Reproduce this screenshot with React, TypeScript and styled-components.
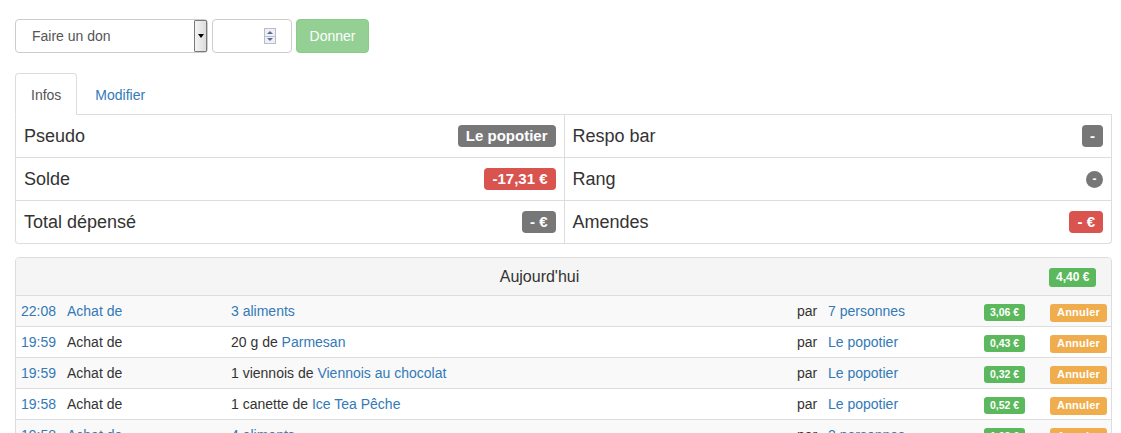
import React from "react";
import styled, { createGlobalStyle, css } from "styled-components";

const GlobalStyle = createGlobalStyle`
  html, body { margin: 0; padding: 0; background: #fff; }
  body {
    font-family: "Liberation Sans", Arial, sans-serif;
    font-size: 14px;
    line-height: 1.42857;
    color: #333;
  }
  * { box-sizing: border-box; }
`;

const Page = styled.div`
  width: 1097px;
  margin-left: 15px;
  padding-top: 19px;
`;

const FormRow = styled.div`
  display: flex;
  align-items: center;
  height: 34px;
`;

const SelectBox = styled.div`
  width: 193px;
  height: 34px;
  border: 1px solid #ccc;
  border-radius: 4px;
  display: flex;
  align-items: center;
  color: #555;
  font-size: 14px;
  padding-left: 16px;
  background: #fff;
`;

const SelectText = styled.span`
  flex: 1;
  padding-top: 2px;
`;

const SelectArrow = styled.span`
  width: 13px;
  height: 32px;
  border: 1px solid #7a7a7a;
  border-radius: 1px;
  background: linear-gradient(to right, #f4f4f4, #dcdcdc);
  display: flex;
  align-items: center;
  justify-content: center;
  &::after {
    content: "";
    border-left: 3px solid transparent;
    border-right: 3px solid transparent;
    border-top: 4px solid #000;
  }
`;

const NumberBox = styled.div`
  width: 80px;
  height: 34px;
  margin-left: 4px;
  border: 1px solid #ccc;
  border-radius: 4px;
  display: flex;
  align-items: center;
  justify-content: flex-end;
  padding-right: 15px;
  background: #fff;
`;

const Spinner = styled.span`
  width: 12px;
  height: 16px;
  display: flex;
  flex-direction: column;
  border: 1px solid #b8bccb;
  background: #eef0f5;
`;

const SpinHalf = styled.span<{ $down?: boolean }>`
  flex: 1;
  display: flex;
  align-items: center;
  justify-content: center;
  ${(p) =>
    p.$down
      ? css`
          border-top: 1px solid #b8bccb;
          &::after {
            content: "";
            border-left: 3px solid transparent;
            border-right: 3px solid transparent;
            border-top: 3px solid #5a6a90;
          }
        `
      : css`
          &::after {
            content: "";
            border-left: 3px solid transparent;
            border-right: 3px solid transparent;
            border-bottom: 3px solid #5a6a90;
          }
        `}
`;

const DonnerButton = styled.button`
  margin-left: 4px;
  height: 34px;
  width: 73px;
  border: 1px solid #4cae4c;
  border-radius: 4px;
  background: #5cb85c;
  opacity: 0.65;
  color: #fff;
  font-family: "Liberation Sans", Arial, sans-serif;
  font-size: 14px;
  padding: 6px 12px;
  cursor: not-allowed;
`;

const Tabs = styled.ul`
  list-style: none;
  margin: 20px 0 0;
  padding: 0;
  display: flex;
  border-bottom: 1px solid #ddd;
`;

const Tab = styled.li<{ $active?: boolean }>`
  margin-bottom: -1px;
  margin-right: 2px;
  padding: 11px 15px 9px;
  line-height: 20px;
  border: 1px solid transparent;
  border-radius: 4px 4px 0 0;
  color: #337ab7;
  ${(p) =>
    p.$active &&
    css`
      color: #555;
      background: #fff;
      border-color: #ddd;
      border-bottom-color: transparent;
    `}
`;

const InfoGrid = styled.div`
  display: grid;
  grid-template-columns: 1fr 1fr;
  border: 1px solid #ddd;
  border-top: 0;
  border-radius: 0 0 4px 4px;
`;

const InfoCell = styled.div<{ $right?: boolean; $first?: boolean }>`
  display: flex;
  align-items: center;
  justify-content: space-between;
  padding: 8px;
  height: ${(p) => (p.$first ? "42px" : "43px")};
  border-top: ${(p) => (p.$first ? "0" : "1px solid #ddd")};
  border-left: ${(p) => (p.$right ? "1px solid #ddd" : "0")};
  font-size: 18px;
  line-height: 26px;
  color: #333;
`;

const colors = {
  default: "#777",
  danger: "#d9534f",
  success: "#5cb85c",
  warning: "#f0ad4e",
};

type Tone = keyof typeof colors;

const InfoLabel = styled.span<{ $tone: Tone }>`
  display: inline-block;
  background: ${(p) => colors[p.$tone]};
  color: #fff;
  font-size: 15px;
  font-weight: bold;
  line-height: 15px;
  padding: 3px 8px 4px;
  border-radius: 4px;
  white-space: nowrap;
`;

const RoundBadge = styled.span`
  display: inline-flex;
  align-items: center;
  justify-content: center;
  width: 17px;
  height: 17px;
  border-radius: 50%;
  background: #777;
  color: #fff;
  font-size: 12px;
  font-weight: bold;
  line-height: 1;
`;

const Panel = styled.div`
  margin-top: 13px;
  border: 1px solid #ddd;
  border-radius: 4px;
  overflow: hidden;
`;

const COLS = "46px 164px 566px 31px 156px 66px 66px";

const PanelHeader = styled.div`
  display: grid;
  grid-template-columns: 1fr 66px;
  align-items: center;
  background: #f5f5f5;
  border-bottom: 1px solid #ddd;
  height: 38px;
`;

const PanelTitle = styled.div`
  text-align: center;
  padding-left: 18px;
  font-size: 16px;
  line-height: 19px;
  color: #333;
`;

const HeaderCell = styled.div`
  padding-left: 4px;
`;

const TotalBadge = styled.span`
  display: inline-block;
  background: #5cb85c;
  color: #fff;
  font-size: 12px;
  font-weight: bold;
  line-height: 12px;
  padding: 3px 7px 4px;
  border-radius: 3px;
`;

const Row = styled.div<{ $striped?: boolean; $first?: boolean }>`
  display: grid;
  grid-template-columns: ${COLS};
  align-items: center;
  height: ${(p) => (p.$first ? "30px" : "31px")};
  border-top: ${(p) => (p.$first ? "0" : "1px solid #ddd")};
  background: ${(p) => (p.$striped ? "#f9f9f9" : "#fff")};
`;

const Cell = styled.div`
  padding: 0 5px;
  line-height: 20px;
  white-space: nowrap;
  overflow: hidden;
`;

const Link = styled.span`
  color: #337ab7;
`;

const PriceBadge = styled.span`
  display: inline-block;
  background: #5cb85c;
  color: #fff;
  font-size: 10.5px;
  font-weight: bold;
  line-height: 11px;
  padding: 3px 6px 3px;
  border-radius: 3px;
`;

const CancelButton = styled.span`
  display: inline-block;
  background: #f0ad4e;
  color: #fff;
  font-size: 11px;
  font-weight: bold;
  line-height: 11px;
  padding: 3px 7px 4px;
  border-radius: 3px;
  letter-spacing: 0.2px;
`;

type Purchase = {
  time: string;
  multi: boolean;
  qty?: string;
  item: string;
  by: string;
  price: string;
};

const purchases: Purchase[] = [
  { time: "22:08", multi: true, item: "3 aliments", by: "7 personnes", price: "3,06 €" },
  { time: "19:59", multi: false, qty: "20 g de", item: "Parmesan", by: "Le popotier", price: "0,43 €" },
  { time: "19:59", multi: false, qty: "1 viennois de", item: "Viennois au chocolat", by: "Le popotier", price: "0,32 €" },
  { time: "19:58", multi: false, qty: "1 canette de", item: "Ice Tea Pêche", by: "Le popotier", price: "0,52 €" },
  { time: "19:58", multi: true, item: "4 aliments", by: "2 personnes", price: "1,03 €" },
];

export default function App() {
  return (
    <>
      <GlobalStyle />
      <Page>
        <FormRow>
          <SelectBox>
            <SelectText>Faire un don</SelectText>
            <SelectArrow />
          </SelectBox>
          <NumberBox>
            <Spinner>
              <SpinHalf />
              <SpinHalf $down />
            </Spinner>
          </NumberBox>
          <DonnerButton disabled>Donner</DonnerButton>
        </FormRow>

        <Tabs>
          <Tab $active>Infos</Tab>
          <Tab>Modifier</Tab>
        </Tabs>

        <InfoGrid>
          <InfoCell $first>
            Pseudo <InfoLabel $tone="default">Le popotier</InfoLabel>
          </InfoCell>
          <InfoCell $first $right>
            Respo bar <InfoLabel $tone="default">-</InfoLabel>
          </InfoCell>
          <InfoCell>
            Solde <InfoLabel $tone="danger">-17,31 €</InfoLabel>
          </InfoCell>
          <InfoCell $right>
            Rang <RoundBadge>-</RoundBadge>
          </InfoCell>
          <InfoCell>
            Total dépensé <InfoLabel $tone="default">- €</InfoLabel>
          </InfoCell>
          <InfoCell $right>
            Amendes <InfoLabel $tone="danger">- €</InfoLabel>
          </InfoCell>
        </InfoGrid>

        <Panel>
          <PanelHeader>
            <PanelTitle>Aujourd'hui</PanelTitle>
            <HeaderCell>
              <TotalBadge>4,40 €</TotalBadge>
            </HeaderCell>
          </PanelHeader>
          {purchases.map((p, i) => (
            <Row key={i} $first={i === 0} $striped={i % 2 === 0}>
              <Cell>
                <Link>{p.time}</Link>
              </Cell>
              <Cell>{p.multi ? <Link>Achat de</Link> : "Achat de"}</Cell>
              <Cell>
                {p.multi ? (
                  <Link>{p.item}</Link>
                ) : (
                  <>
                    {p.qty} <Link>{p.item}</Link>
                  </>
                )}
              </Cell>
              <Cell>par</Cell>
              <Cell>
                <Link>{p.by}</Link>
              </Cell>
              <Cell>
                <PriceBadge>{p.price}</PriceBadge>
              </Cell>
              <Cell>
                <CancelButton>Annuler</CancelButton>
              </Cell>
            </Row>
          ))}
        </Panel>
      </Page>
    </>
  );
}
